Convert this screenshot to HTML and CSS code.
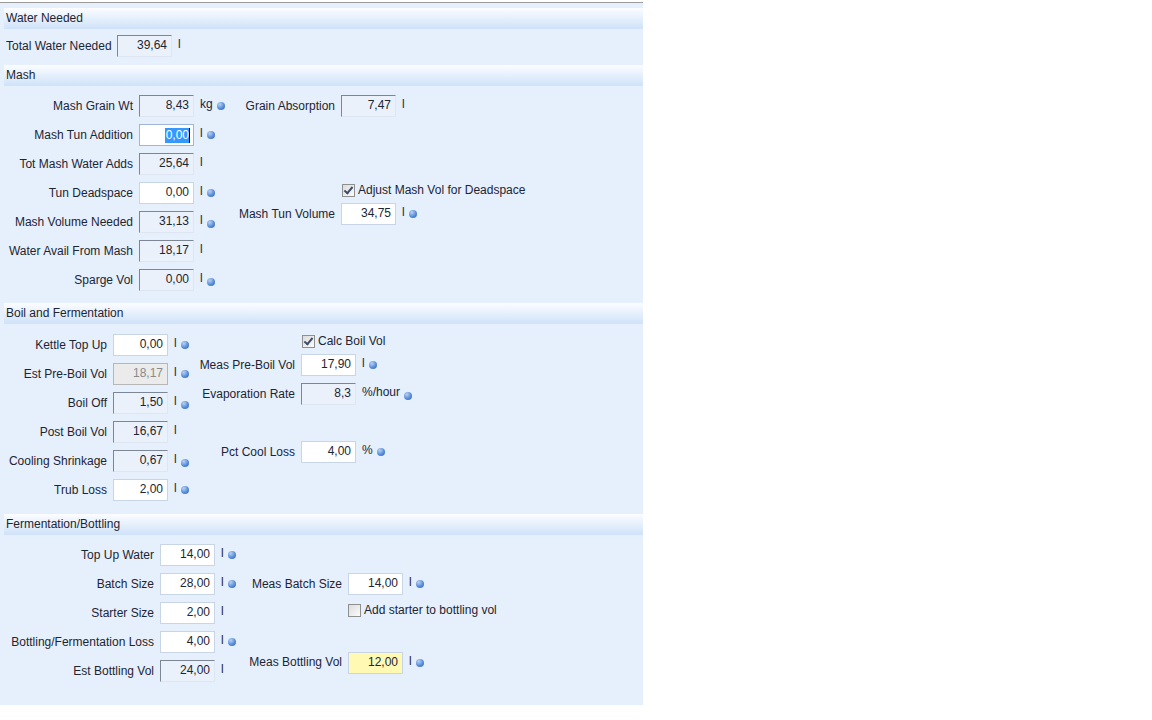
FILE: index.html
```html
<!DOCTYPE html>
<html lang="en">
<head>
    <meta charset="UTF-8">
    <title>Water Needed</title>
    <link rel="stylesheet" href="styles.css">
</head>
<body>
    <div class="panel">
        <div class="sec-head">Water Needed</div>
        <div class="sec-body water">
            <div class="col-left">
                <div class="row"><span class="lbl">Total Water Needed</span><span class="box ro">39,64</span><span class="unit">l</span></div>
            </div>
        </div>

        <div class="sec-head">Mash</div>
        <div class="sec-body mash">
            <div class="col-left">
                <div class="row"><span class="lbl">Mash Grain Wt</span><span class="box ro">8,43</span><span class="unit">kg</span><span class="dot"></span></div>
                <div class="row"><span class="lbl">Mash Tun Addition</span><span class="box focus"><span class="sel">0,00</span><span class="caret"></span></span><span class="unit">l</span><span class="dot"></span></div>
                <div class="row"><span class="lbl">Tot Mash Water Adds</span><span class="box ro">25,64</span><span class="unit">l</span></div>
                <div class="row"><span class="lbl">Tun Deadspace</span><span class="box">0,00</span><span class="unit">l</span><span class="dot"></span></div>
                <div class="row"><span class="lbl">Mash Volume Needed</span><span class="box ro">31,13</span><span class="unit">l</span><span class="dot low"></span></div>
                <div class="row"><span class="lbl">Water Avail From Mash</span><span class="box ro">18,17</span><span class="unit">l</span></div>
                <div class="row"><span class="lbl">Sparge Vol</span><span class="box ro">0,00</span><span class="unit">l</span><span class="dot low"></span></div>
            </div>
            <div class="col-right">
                <div class="row"><span class="lbl">Grain Absorption</span><span class="box ro">7,47</span><span class="unit">l</span></div>
                <div class="check-row gap-66"><span class="check on"></span><span>Adjust Mash Vol for Deadspace</span></div>
                <div class="row gap-6"><span class="lbl">Mash Tun Volume</span><span class="box">34,75</span><span class="unit">l</span><span class="dot"></span></div>
            </div>
        </div>

        <div class="sec-head">Boil and Fermentation</div>
        <div class="sec-body boil">
            <div class="col-left">
                <div class="row"><span class="lbl">Kettle Top Up</span><span class="box">0,00</span><span class="unit">l</span><span class="dot"></span></div>
                <div class="row"><span class="lbl">Est Pre-Boil Vol</span><span class="box dis">18,17</span><span class="unit">l</span><span class="dot"></span></div>
                <div class="row"><span class="lbl">Boil Off</span><span class="box ro">1,50</span><span class="unit">l</span><span class="dot low"></span></div>
                <div class="row"><span class="lbl">Post Boil Vol</span><span class="box ro">16,67</span><span class="unit">l</span></div>
                <div class="row"><span class="lbl">Cooling Shrinkage</span><span class="box ro">0,67</span><span class="unit">l</span><span class="dot low"></span></div>
                <div class="row"><span class="lbl">Trub Loss</span><span class="box">2,00</span><span class="unit">l</span><span class="dot"></span></div>
            </div>
            <div class="col-right">
                <div class="check-row"><span class="check on"></span><span>Calc Boil Vol</span></div>
                <div class="row gap-6"><span class="lbl">Meas Pre-Boil Vol</span><span class="box">17,90</span><span class="unit">l</span><span class="dot"></span></div>
                <div class="row gap-7"><span class="lbl">Evaporation Rate</span><span class="box ro">8,3</span><span class="unit">%/hour</span><span class="dot low"></span></div>
                <div class="row gap-36"><span class="lbl">Pct Cool Loss</span><span class="box">4,00</span><span class="unit">%</span><span class="dot"></span></div>
            </div>
        </div>

        <div class="sec-head">Fermentation/Bottling</div>
        <div class="sec-body ferm">
            <div class="col-left">
                <div class="row"><span class="lbl">Top Up Water</span><span class="box">14,00</span><span class="unit">l</span><span class="dot"></span></div>
                <div class="row"><span class="lbl">Batch Size</span><span class="box">28,00</span><span class="unit">l</span><span class="dot"></span></div>
                <div class="row"><span class="lbl">Starter Size</span><span class="box">2,00</span><span class="unit">l</span></div>
                <div class="row"><span class="lbl">Bottling/Fermentation Loss</span><span class="box">4,00</span><span class="unit">l</span><span class="dot"></span></div>
                <div class="row"><span class="lbl">Est Bottling Vol</span><span class="box ro">24,00</span><span class="unit">l</span></div>
            </div>
            <div class="col-right">
                <div class="row gap-29"><span class="lbl">Meas Batch Size</span><span class="box">14,00</span><span class="unit">l</span><span class="dot"></span></div>
                <div class="check-row gap-8"><span class="check"></span><span>Add starter to bottling vol</span></div>
                <div class="row gap-35"><span class="lbl lbl-up">Meas Bottling Vol</span><span class="box hi">12,00</span><span class="unit">l</span><span class="dot"></span></div>
            </div>
        </div>
    </div>
</body>
</html>
```

FILE: styles.css
```css
* {
    margin: 0;
    padding: 0;
    box-sizing: border-box;
}

body {
    font-family: "Liberation Sans", Arial, sans-serif;
    font-size: 12px;
    color: #1c2533;
    background: #fff;
    padding-top: 2px;
}

.panel {
    width: 643px;
    height: 703px;
    background: #e6effc;
    border-top: 1px solid #9c9c9c;
    padding-top: 5px;
}

.sec-head {
    margin-left: 4px;
    height: 21px;
    line-height: 20px;
    padding-left: 2px;
    background: linear-gradient(#fcfdff, #cfe2f9);
}

.sec-body {
    display: flex;
    padding-left: 6px;
}

.col-left,
.col-right {
    display: flex;
    flex-direction: column;
    gap: 7px;
}

.col-right {
    gap: 0;
}

.row {
    display: flex;
    align-items: center;
    height: 22px;
}

.lbl {
    flex: none;
    text-align: right;
    margin-right: 6px;
    white-space: nowrap;
}

.box {
    flex: none;
    width: 55px;
    height: 22px;
    line-height: 19px;
    padding-right: 4px;
    text-align: right;
    background: #fff;
    border: 1px solid #c8d5e6;
}

.box.ro {
    background: #ebf1fa;
    border-color: #7c8694 #dde6f2 #dde6f2 #7c8694;
}

.box.dis {
    background: #ebebeb;
    border-color: #b7b7b7;
    color: #8a8a8a;
}

.box.hi {
    background: #fff9b4;
}

.box.focus {
    border-color: #9fb6d6;
    padding-right: 3px;
    display: flex;
    justify-content: flex-end;
    align-items: center;
}

.sel {
    background: #3399ff;
    color: #fff;
    line-height: 15px;
    padding: 0 0 0 1px;
}

.caret {
    width: 1px;
    height: 15px;
    background: #000;
}

.unit {
    align-self: flex-start;
    margin-left: 6px;
    margin-top: 2px;
    line-height: 15px;
}

.dot {
    width: 8px;
    height: 8px;
    border-radius: 50%;
    margin-left: 4px;
    background: radial-gradient(circle at 35% 30%, #b8d2f4, #4f86d6 60%, #3567b8);
}

.dot.low {
    margin-top: 4px;
}

.check-row {
    display: flex;
    align-items: center;
    height: 14px;
    gap: 3px;
}

.check {
    width: 13px;
    height: 13px;
    border: 1px solid #8e8f8f;
    background: linear-gradient(135deg, #dcdcdc, #fbfbfb);
    position: relative;
}

.check.on::after {
    content: "";
    position: absolute;
    left: 3px;
    top: 0;
    width: 3px;
    height: 7px;
    border: solid #3f4d6a;
    border-width: 0 2px 2px 0;
    transform: rotate(40deg);
}

/* Column widths per section */
.water .lbl { width: 105px; }

.mash .col-left { width: 224px; }
.mash .col-left .lbl { width: 127px; }
.mash .col-right .lbl { width: 105px; }
.mash .check-row { margin-left: 112px; }

.boil .col-left { width: 189px; }
.boil .col-left .lbl { width: 101px; }
.boil .col-right .lbl { width: 100px; }
.boil .check-row { margin-left: 107px; }

.ferm .col-left { width: 236px; }
.ferm .col-left .lbl { width: 148px; }
.ferm .col-right .lbl { width: 100px; }
.ferm .check-row { margin-left: 106px; }

.lbl-up {
    margin-bottom: 3px;
}

.gap-6 { margin-top: 6px; }
.gap-7 { margin-top: 7px; }
.gap-8 { margin-top: 8px; }
.gap-29 { margin-top: 29px; }
.gap-35 { margin-top: 35px; }
.gap-36 { margin-top: 36px; }
.gap-66 { margin-top: 66px; }

/* Vertical spacing of section bodies */
.water { padding-top: 6px; padding-bottom: 8px; }
.mash { padding-top: 9px; padding-bottom: 12px; }
.boil { padding-top: 10px; padding-bottom: 13px; }
.ferm { padding-top: 9px; }
```
